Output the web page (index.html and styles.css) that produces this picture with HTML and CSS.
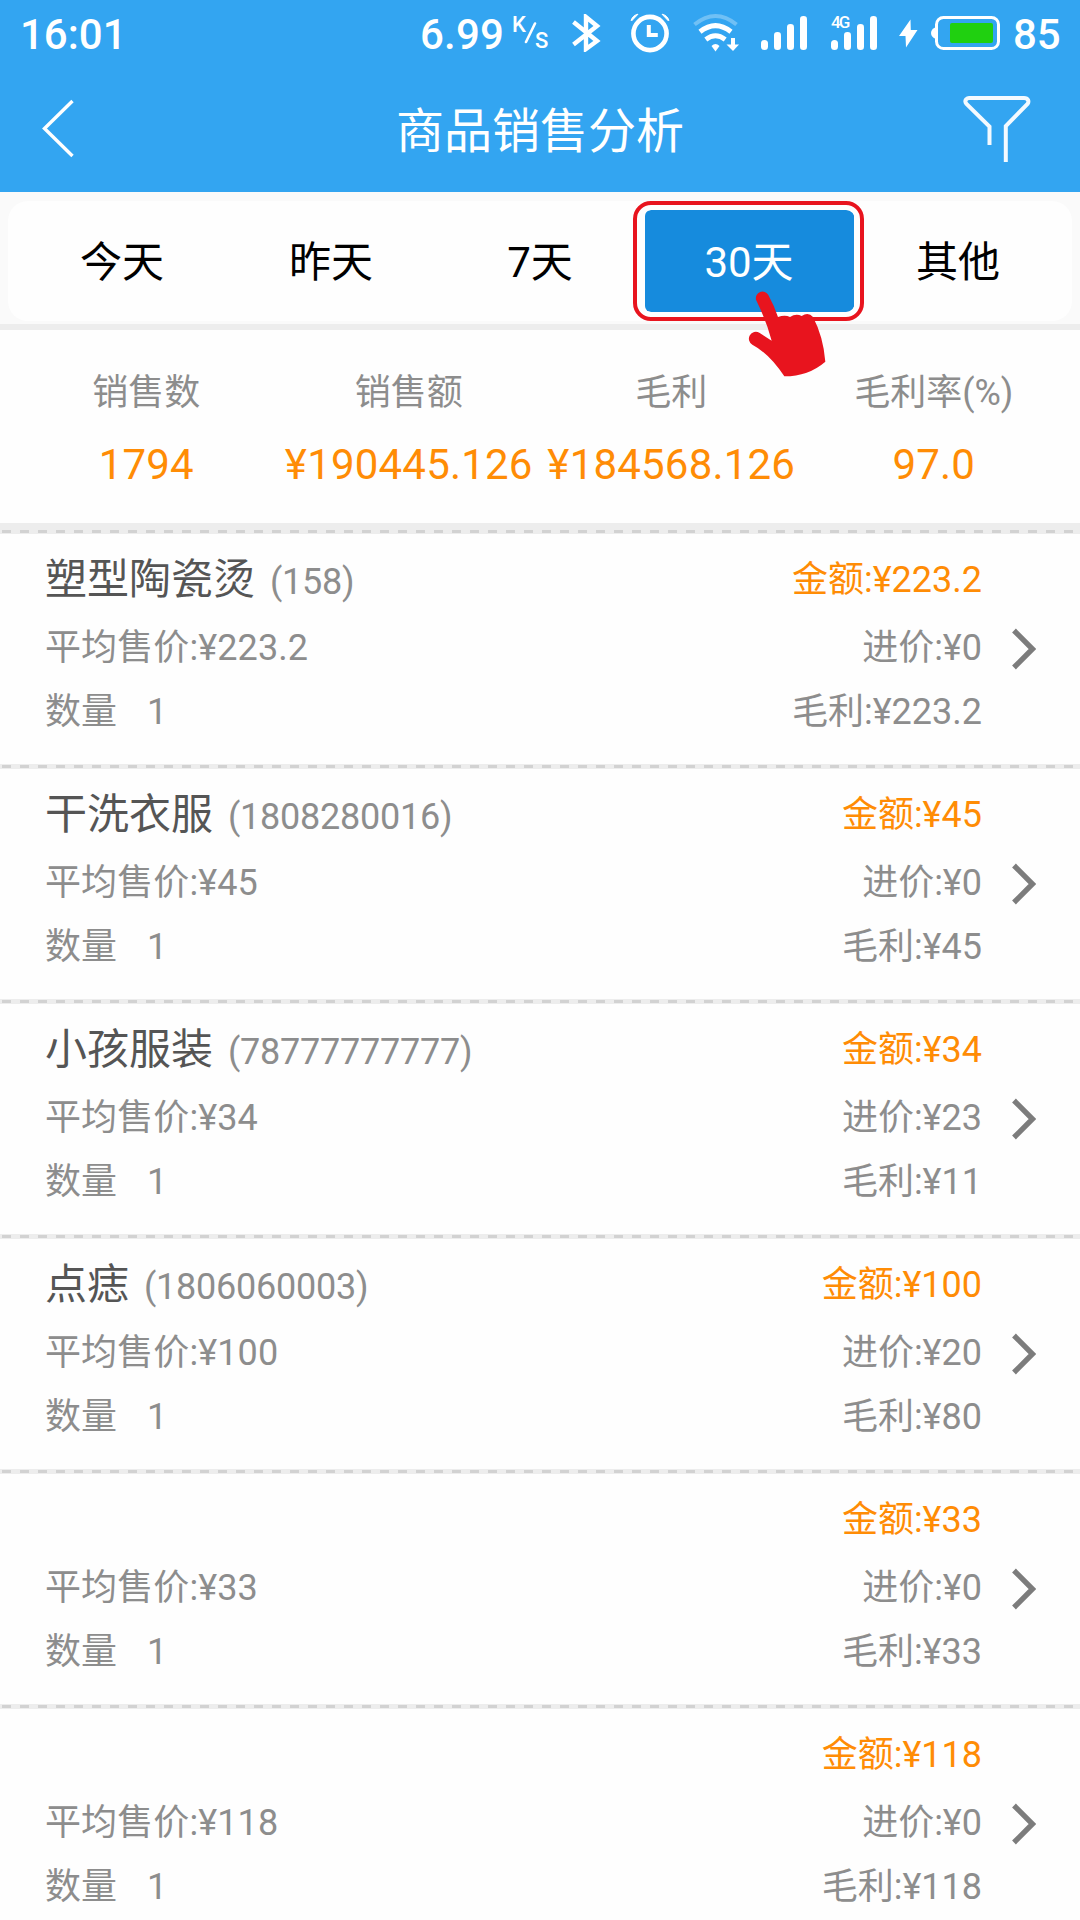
FILE: index.html
```html
<!DOCTYPE html>
<html lang="zh-CN">
<head>
<meta charset="utf-8">
<title>商品销售分析</title>
<link rel="stylesheet" href="styles.css">
</head>
<body>
<header class="header">
  <div class="status">
    <span class="clock">16:01</span>
    <span class="speed">6.99</span>
    <span class="unit"><span class="unit-k">K</span><svg class="unit-slash" width="13" height="22" viewBox="0 0 13 22"><path d="M11 1.500 2 20" stroke="#fff" stroke-width="2.600" stroke-linecap="round"/></svg><span class="unit-s">S</span></span>
    <svg class="bluetooth" width="30" height="38" viewBox="0 0 30 38" fill="none" stroke="#fff" stroke-width="4.400"><path d="M1.500 8 25 27 14 35V3l11 9L1.500 30.500"/></svg>
    <svg class="alarm" width="40" height="40" viewBox="0 0 40 40" fill="none" stroke="#fff"><circle cx="20" cy="20.500" r="16.600" stroke-width="4.600"/><path d="M18.800 12v10h9" stroke-width="4"/><path d="M1 7.500Q3 2 8 1.200L1.500 8M39 7.500Q37 2 32 1.200L38.500 8" fill="#fff" stroke-width="1"/></svg>
    <svg class="wifi" width="48" height="40" viewBox="0 0 48 40" fill="none" stroke="#fff"><path d="M1.500 11.500Q22.500-5.500 43.500 11.500" stroke-width="4" opacity=".3"/><path d="M7 18.800Q22.500 6.500 38 18.800" stroke-width="5"/><path d="M12.800 26.500Q22.500 19 32.200 26.500" stroke-width="4.800"/><path d="M18.500 33q4-4 8 0l-4 5.500z" fill="#fff" stroke="none"/><path d="M40 25v7" stroke-width="4"/><path d="M33.500 31.500h12.500L40 38z" fill="#fff" stroke="none"/></svg>
    <svg class="signal" width="46" height="34" viewBox="0 0 46 34" fill="#fff"><rect y="24" width="7" height="10" rx="3.500"/><rect x="13" y="16" width="7" height="18" rx="3.300"/><rect x="26" y="8" width="7" height="26" rx="3.300"/><rect x="39" width="7" height="34" rx="3.300"/></svg>
    <span class="signal-4g"><span class="net">4G</span><svg class="bars" width="46" height="34" viewBox="0 0 46 34" fill="#fff"><rect y="24" width="7" height="10" rx="3.500"/><rect x="13" y="16" width="7" height="18" rx="3.300"/><rect x="26" y="8" width="7" height="26" rx="3.300"/><rect x="39" width="7" height="34" rx="3.300"/></svg></span>
    <svg class="bolt" width="19" height="29" viewBox="0 0 19 29"><path d="M11.500.500 0 17h6.500L7 28.500 18.500 11H11.800z" fill="#fff"/></svg>
    <svg class="battery" width="70" height="34" viewBox="0 0 70 34"><path d="M5 11Q0 13 0 17t5 6z" fill="#fff"/><rect x="5.500" y="1.500" width="62" height="31" rx="7" fill="none" stroke="#fff" stroke-width="3"/><rect x="19" y="7" width="43" height="20" rx="2" fill="#20d010"/></svg>
    <span class="level">85</span>
  </div>
  <div class="titlebar">
    <svg class="back" width="34" height="60" viewBox="0 0 34 60"><path d="M31.500 3 3.500 30.500 31.500 58" fill="none" stroke="#fff" stroke-width="3.400"/></svg>
    <h1 class="title">商品销售分析</h1>
    <svg class="filter" width="68" height="68" viewBox="0 0 68 68"><path d="M26.500 50V31.500L3.500 9Q1.500 6.500 3 4.500 4.500 3 6 3H61Q64 3 65 5T64.500 9L42.800 31V67" fill="none" stroke="#f4faff" stroke-width="4"/></svg>
  </div>
</header>

<nav class="tabs-wrap">
  <div class="tabs">
    <span class="tab">今天</span>
    <span class="tab">昨天</span>
    <span class="tab">7天</span>
    <span class="tab tab-active">30天
      <span class="highlight"></span>
      <svg class="hand" width="80" height="90" viewBox="441 324 240 270"><path d="M468 359A20 20 0 0 1 505 345Q522 376 534 411Q555 403 570 411Q588 399 605 408Q625 395 639 411Q670 470 676 545Q625 589 553 589Q508 521 457 494A20 20 0 0 1 478 458Q496 470 515 482Q499 422 468 359z" fill="#e8141e"/></svg>
    </span>
    <span class="tab">其他</span>
  </div>
</nav>

<section class="summary">
  <div class="stat"><span class="label">销售数</span><span class="value">1794</span></div>
  <div class="stat"><span class="label">销售额</span><span class="value">¥190445.126</span></div>
  <div class="stat"><span class="label">毛利</span><span class="value">¥184568.126</span></div>
  <div class="stat"><span class="label">毛利率(%)</span><span class="value">97.0</span></div>
</section>
<div class="divider divider-thick"></div>

<main class="list">
  <article class="item">
    <div class="left"><div class="name">塑型陶瓷烫<span class="code">(158)</span></div><div class="price">平均售价:¥223.2</div><div class="qty">数量<span class="count">1</span></div></div>
    <div class="right"><div class="amount">金额:¥223.2</div><div class="price">进价:¥0</div><div class="qty">毛利:¥223.2</div></div>
    <svg class="chevron" width="24" height="42" viewBox="0 0 24 42"><path d="M2 2.500 20.500 21 2 39.500"/></svg>
  </article>
  <div class="divider"></div>
  <article class="item">
    <div class="left"><div class="name">干洗衣服<span class="code">(1808280016)</span></div><div class="price">平均售价:¥45</div><div class="qty">数量<span class="count">1</span></div></div>
    <div class="right"><div class="amount">金额:¥45</div><div class="price">进价:¥0</div><div class="qty">毛利:¥45</div></div>
    <svg class="chevron" width="24" height="42" viewBox="0 0 24 42"><path d="M2 2.500 20.500 21 2 39.500"/></svg>
  </article>
  <div class="divider"></div>
  <article class="item">
    <div class="left"><div class="name">小孩服装<span class="code">(78777777777)</span></div><div class="price">平均售价:¥34</div><div class="qty">数量<span class="count">1</span></div></div>
    <div class="right"><div class="amount">金额:¥34</div><div class="price">进价:¥23</div><div class="qty">毛利:¥11</div></div>
    <svg class="chevron" width="24" height="42" viewBox="0 0 24 42"><path d="M2 2.500 20.500 21 2 39.500"/></svg>
  </article>
  <div class="divider"></div>
  <article class="item">
    <div class="left"><div class="name">点痣<span class="code">(1806060003)</span></div><div class="price">平均售价:¥100</div><div class="qty">数量<span class="count">1</span></div></div>
    <div class="right"><div class="amount">金额:¥100</div><div class="price">进价:¥20</div><div class="qty">毛利:¥80</div></div>
    <svg class="chevron" width="24" height="42" viewBox="0 0 24 42"><path d="M2 2.500 20.500 21 2 39.500"/></svg>
  </article>
  <div class="divider"></div>
  <article class="item">
    <div class="left"><div class="name"></div><div class="price">平均售价:¥33</div><div class="qty">数量<span class="count">1</span></div></div>
    <div class="right"><div class="amount">金额:¥33</div><div class="price">进价:¥0</div><div class="qty">毛利:¥33</div></div>
    <svg class="chevron" width="24" height="42" viewBox="0 0 24 42"><path d="M2 2.500 20.500 21 2 39.500"/></svg>
  </article>
  <div class="divider"></div>
  <article class="item">
    <div class="left"><div class="name"></div><div class="price">平均售价:¥118</div><div class="qty">数量<span class="count">1</span></div></div>
    <div class="right"><div class="amount">金额:¥118</div><div class="price">进价:¥0</div><div class="qty">毛利:¥118</div></div>
    <svg class="chevron" width="24" height="42" viewBox="0 0 24 42"><path d="M2 2.500 20.500 21 2 39.500"/></svg>
  </article>
</main>
</body>
</html>
```
FILE: styles.css
```css
* { box-sizing: border-box; }
body {
  margin: 0;
  width: 1080px;
  height: 1920px;
  overflow: hidden;
  background: #fefefe;
  font-family: Roboto, "Noto Sans CJK SC", sans-serif;
  font-size: 36px;
  color: #8d8d8d;
}
svg { display: block; flex: none; }

.header { height: 192px; background: #33a5f1; color: #fff; }
.status {
  display: flex;
  align-items: flex-start;
  height: 68px;
  padding-left: 20px;
  font-size: 42px;
  font-weight: 500;
  line-height: 69px;
}
.clock { width: 400px; }
.speed { width: 92px; letter-spacing: 0.2px; }
.unit { display: flex; width: 60px; font-size: 22px; line-height: 22px; }
.unit-k { width: 12px; margin-top: 14px; }
.unit-slash { margin-top: 22px; }
.unit-s { width: 14px; margin-top: 30px; margin-left: -2px; }
.bluetooth { margin-top: 14px; }
.alarm { margin: 13px 0 0 28px; }
.wifi { margin: 13px 0 0 23px; }
.signal { margin: 16px 0 0 20px; }
.signal-4g { position: relative; margin: 16px 0 0 24px; }
.net {
  position: absolute;
  left: 0;
  top: -2px;
  font-size: 17px;
  line-height: 17px;
  letter-spacing: -1.8px;
}
.bolt { margin: 19px 0 0 22px; }
.battery { margin: 16px 0 0 13px; }
.level { margin-left: 12px; letter-spacing: -0.2px; }

.titlebar {
  display: flex;
  align-items: flex-start;
  justify-content: space-between;
  height: 124px;
  padding: 0 49px 0 41px;
}
.back { margin: 30px 34px 0 0; }
.title { margin: 0 0 0 8px; font-size: 48px; font-weight: 400; line-height: 127px; }
.filter { margin-top: 27px; }

.tabs-wrap { height: 138px; padding: 9px 8px 0; background: #fafafa; border-bottom: 6px solid #ededed; }
.tabs {
  display: flex;
  height: 120px;
  padding: 9px 9.5px;
  background: #fefefe;
  border-radius: 20px;
  color: #000;
}
.tab {
  position: relative;
  flex: 1;
  height: 102px;
  font-size: 42px;
  line-height: 106px;
  text-align: center;
}
.tab-active { color: #fff; background: #168bdd; border-radius: 6px; }
.highlight {
  position: absolute;
  inset: -9px -10px -9px -12px;
  border: 4px solid #e8141e;
  border-radius: 18px;
  box-shadow: inset 0 0 0 5px #fefefe;
}
.hand { position: absolute; left: 102px; top: 78px; z-index: 2; }

.summary { display: flex; height: 193px; padding: 33px 15px 0; }
.stat { display: flex; flex: 1; flex-direction: column; align-items: center; }
.label { line-height: 60px; }
.value { margin-top: 12px; font-size: 42px; line-height: 60px; letter-spacing: 0.2px; color: #ff8c05; white-space: nowrap; }

.divider {
  height: 5px;
  background:
    repeating-linear-gradient(90deg, #d2d2d2 0 9px, transparent 9px 18px) 2px 1px / 1080px 3px no-repeat,
    #ededed;
}
.divider-thick {
  height: 11px;
  background:
    repeating-linear-gradient(90deg, #d2d2d2 0 9px, transparent 9px 18px) 2px 7px / 1080px 3px no-repeat,
    #ededed;
}

.item { display: flex; height: 230px; padding: 16px 44px 0 45px; line-height: 60px; white-space: nowrap; }
.left { flex: 1; }
.right { text-align: right; }
.name { height: 60px; font-size: 42px; color: #555; }
.code { margin-left: 15px; font-size: 36px; letter-spacing: -0.25px; color: #8d8d8d; }
.amount { color: #ff8c05; }
.price { margin-top: 8px; }
.left .price { letter-spacing: 0.1px; }
.qty { margin-top: 4px; }
.count { margin-left: 30px; }
.chevron { margin: 78px 0 0 30px; fill: none; stroke: #7c7c7c; stroke-width: 5.4; }
```
